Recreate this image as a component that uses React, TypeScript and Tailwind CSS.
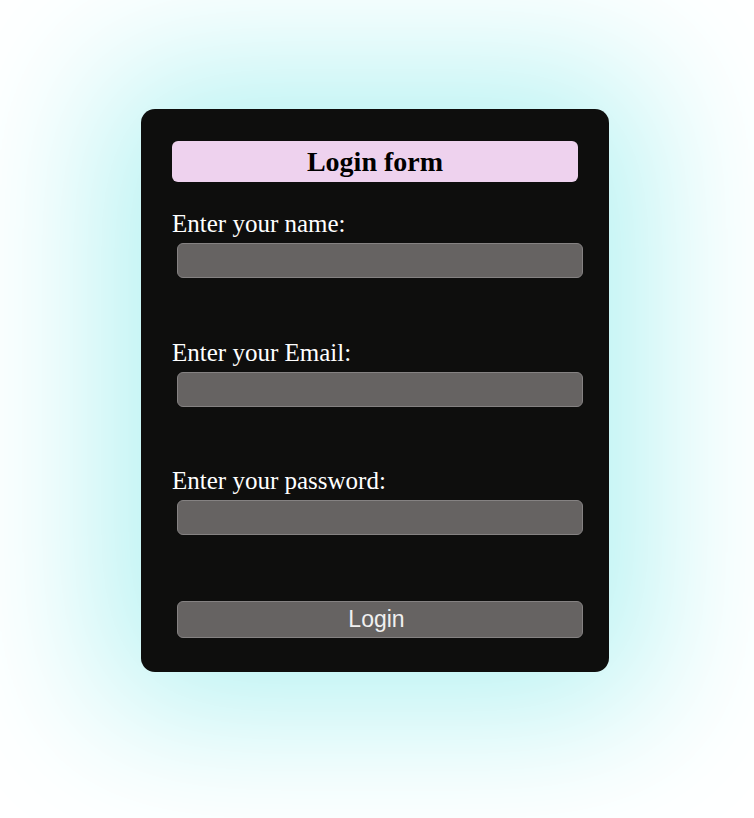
import React from "react";

const serif = "font-['Liberation_Serif','Times_New_Roman',serif]";

function Field({ label, type, first }: { label: string; type: string; first?: boolean }) {
  return (
    <div className={first ? "mt-[27px]" : "mt-[59.5px]"}>
      <label className={`block text-[25px] leading-[29px] text-white ${serif}`}>{label}</label>
      <input
        type={type}
        className="mt-[5px] ml-[5px] block h-[35px] w-[406px] rounded-[6px] border border-[#858282] bg-[#666362] outline-none"
      />
    </div>
  );
}

export default function App() {
  return (
    <div className="flex min-h-[818px] w-full justify-center bg-white pr-[4px] pt-[109px]">
      <div className="h-[563px] w-[468px] rounded-[14px] bg-[#0e0e0d] px-[31px] pt-[32px] shadow-[0_0_150px_40px_#b4f2f2]">
        <div className="flex h-[41px] w-[406px] items-center justify-center rounded-[6px] bg-[#eed2ee]">
          <h2 className={`text-[28px] font-bold leading-none text-black ${serif}`}>Login form</h2>
        </div>
        <Field label="Enter your name:" type="text" first />
        <Field label="Enter your Email:" type="email" />
        <Field label="Enter your password:" type="password" />
        <button className="mt-[66px] ml-[5px] block h-[37px] w-[406px] rounded-[6px] border border-[#858282] bg-[#666362] pr-[7px] font-['Liberation_Sans',Arial,sans-serif] text-[23px] leading-none text-[#f0f0f0]">
          Login
        </button>
      </div>
    </div>
  );
}
